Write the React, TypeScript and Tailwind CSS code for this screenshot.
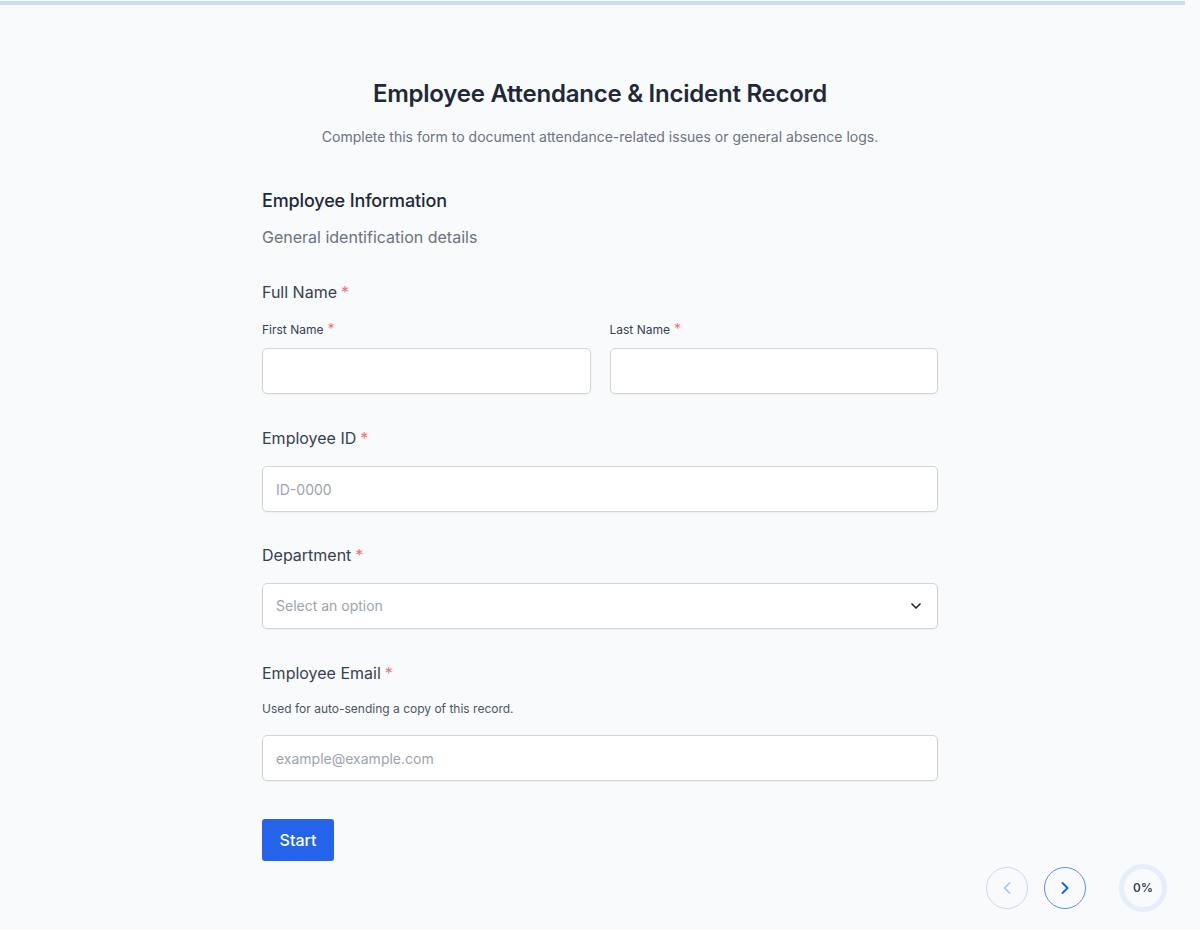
import { ChevronDown, ChevronLeft, ChevronRight } from "lucide-react"

function Req({ small = false }: { small?: boolean }) {
  return <span className={small ? "ml-1 text-sm leading-3 text-[#f87171]" : "ml-1 text-[#f87171]"}>*</span>
}

function TextInput({ placeholder = "" }: { placeholder?: string }) {
  return (
    <input
      type="text"
      placeholder={placeholder}
      className="block h-[46px] w-full rounded-[5px] border border-[#d1d5db] bg-white px-[13px] text-sm text-gray-800 shadow-[0_1px_2px_rgba(0,0,0,0.05)] placeholder:text-[#9ca3af] focus:outline-none"
    />
  )
}

export default function App() {
  return (
    <div className="min-h-[930px] bg-[#f8fafc] font-['Inter','Liberation_Sans',sans-serif] text-[#374151]">
      {/* progress bar */}
      <div className="pt-px">
        <div className="h-1 w-[1185px] bg-[#cddcf6]" />
      </div>

      <div className="mx-auto w-[676px] pt-[73px] pb-16">
        <h1 className="text-center text-2xl leading-8 font-semibold tracking-[-0.01em] text-[#1f2937]">
          Employee Attendance &amp; Incident Record
        </h1>
        <p className="mt-[17px] text-center text-sm leading-5 text-[#6b7280]">
          Complete this form to document attendance-related issues or general absence logs.
        </p>

        <h2 className="mt-10 text-lg leading-7 font-medium tracking-[-0.008em] text-[#1f2937]">Employee Information</h2>
        <p className="mt-[10px] text-base leading-6 text-[#6b7280]">General identification details</p>

        {/* Full name */}
        <div className="mt-[31px] text-base leading-6">
          Full Name<Req />
        </div>
        <div className="mt-[18px] grid grid-cols-2 gap-x-[19px]">
          <div>
            <label className="block text-xs leading-4">
              First Name<Req small />
            </label>
            <div className="mt-[10px]">
              <TextInput />
            </div>
          </div>
          <div>
            <label className="block text-xs leading-4">
              Last Name<Req small />
            </label>
            <div className="mt-[10px]">
              <TextInput />
            </div>
          </div>
        </div>

        {/* Employee ID */}
        <label className="mt-8 block text-base leading-6">
          Employee ID<Req />
        </label>
        <div className="mt-4">
          <TextInput placeholder="ID-0000" />
        </div>

        {/* Department */}
        <label className="mt-[31px] block text-base leading-6">
          Department<Req />
        </label>
        <div className="mt-4 flex h-[46px] w-full items-center justify-between rounded-[5px] border border-[#d1d5db] bg-white pr-[13px] pl-[13px] shadow-[0_1px_2px_rgba(0,0,0,0.05)]">
          <span className="text-sm text-[#9ca3af]">Select an option</span>
          <ChevronDown size={16} strokeWidth={2.5} className="text-[#1f2937]" />
        </div>

        {/* Email */}
        <label className="mt-8 block text-base leading-6">
          Employee Email<Req />
        </label>
        <p className="mt-4 text-xs leading-4 text-[#4b5563]">Used for auto-sending a copy of this record.</p>
        <div className="mt-[18px]">
          <TextInput placeholder="example@example.com" />
        </div>

        <button className="mt-[38px] h-[42px] w-[72px] rounded-[3px] bg-[#2563eb] text-base font-medium text-white">
          Start
        </button>
      </div>

      {/* navigation */}
      <div className="fixed right-[33px] bottom-[18px] flex items-center">
        <button className="flex h-[42px] w-[42px] items-center justify-center rounded-full border-[1.5px] border-[#c7d8f8] text-[#a9c2f3]">
          <ChevronLeft size={20} strokeWidth={2} />
        </button>
        <button className="ml-4 flex h-[42px] w-[42px] items-center justify-center rounded-full border-[1.5px] border-[#5b8def] text-[#2563eb]">
          <ChevronRight size={20} strokeWidth={2.5} />
        </button>
        <div className="ml-[33px] flex h-12 w-12 items-center justify-center rounded-full border-[5px] border-[#e6eefc] text-xs font-semibold text-[#374151]">
          0%
        </div>
      </div>
    </div>
  )
}
